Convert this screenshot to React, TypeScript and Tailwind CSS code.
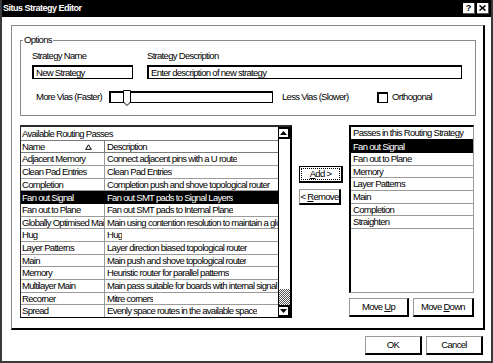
// Situs Strategy Editor — grayscale Win95-style dialog
const PASSES: [string, string][] = [
  ['Adjacent Memory', 'Connect adjacent pins with a U route'],
  ['Clean Pad Entries', 'Clean Pad Entries'],
  ['Completion', 'Completion push and shove topological router'],
  ['Fan out Signal', 'Fan out SMT pads to Signal Layers'],
  ['Fan out to Plane', 'Fan out SMT pads to Internal Plane'],
  ['Globally Optimised Main', 'Main using contention resolution to maintain a global'],
  ['Hug', 'Hug'],
  ['Layer Patterns', 'Layer direction biased topological router'],
  ['Main', 'Main push and shove topological router'],
  ['Memory', 'Heuristic router for parallel patterns'],
  ['Multilayer Main', 'Main pass suitable for boards with internal signal layers'],
  ['Recorner', 'Mitre corners'],
  ['Spread', 'Evenly space routes in the available space'],
];

const STRATEGY = ['Fan out Signal', 'Fan out to Plane', 'Memory', 'Layer Patterns', 'Main', 'Completion', 'Straighten'];

// row pitch ~12.67px: 13,13,12 pattern keeps lines crisp
const rowH = (i: number) => (i % 3 === 2 ? 'h-[12px]' : 'h-[13px]');

function Btn({ children, w, h = 'h-[19px]' }: { children: React.ReactNode; w: string; h?: string }) {
  return (
    <div
      className={`${w} ${h} flex items-center justify-center bg-white border-t border-l border-[#9a9a9a] border-b-2 border-r-2 border-b-black border-r-black leading-none whitespace-nowrap`}>
      {children}
    </div>
  );
}

function Arrow({ up }: { up: boolean }) {
  return (
    <svg width="7" height="4" viewBox="0 0 7 4">
      <polygon points={up ? '3.5,0 7,4 0,4' : '0,0 7,0 3.5,4'} fill="#000" />
    </svg>
  );
}

export default function App() {
  return (
    <div className="font-['Liberation_Sans',Arial,sans-serif] text-[9.5px] tracking-[-0.7px] w-[493px] h-[363px] bg-white border-x-2 border-b-2 border-[#3a3a3a] flex flex-col overflow-hidden text-black whitespace-nowrap">
      {/* Title bar */}
      <div className="h-[17px] bg-black flex items-center justify-between pl-[1px] pr-[2px] shrink-0">
        <span className="font-bold text-[9px] tracking-[-0.5px] text-white leading-none">Situs Strategy Editor</span>
        <div className="flex gap-[2px]">
          <div className="w-[12px] h-[11px] bg-white border-r border-b border-[#555] flex items-center justify-center font-bold text-[9px] tracking-normal leading-none">?</div>
          <div className="w-[12px] h-[11px] bg-white border-r border-b border-[#555] flex items-center justify-center">
            <svg width="7" height="6" viewBox="0 0 7 6"><path d="M0.5 0.5 L6.5 5.5 M6.5 0.5 L0.5 5.5" stroke="#000" strokeWidth="1.6" /></svg>
          </div>
        </div>
      </div>

      {/* Outer frame */}
      <div className="ml-[9px] mt-[8px] w-[474px] h-[305px] border-t border-l border-[#8a8a8a] border-b-2 border-r-2 border-b-black border-r-black flex flex-col pl-[8px] pt-[14px] shrink-0">
        {/* Options group */}
        <div className="relative w-[456px] h-[76px] border border-[#8a8a8a] shrink-0">
          <span className="absolute -top-[7px] left-[2px] bg-white px-[1px] leading-[12px]">Options</span>
          <div className="flex pt-[9px] pl-[11px]">
            <div className="w-[101px] flex flex-col">
              <span className="leading-[12px] h-[12px]">Strategy Name</span>
              <div className="mt-[3px] h-[14px] border-2 border-black border-r border-b flex items-center pl-[2px] leading-none">New Strategy</div>
            </div>
            <div className="ml-[14px] w-[315px] flex flex-col">
              <span className="leading-[12px] h-[12px]">Strategy Description</span>
              <div className="mt-[3px] h-[14px] border-2 border-black border-r border-b flex items-center pl-[2px] leading-none">Enter description of new strategy</div>
            </div>
          </div>
          <div className="flex items-center h-[16px] mt-[10px] pl-[15px]">
            <span className="w-[73px] leading-none">More Vias (Faster)</span>
            <div className="relative w-[164px] h-[12px] border border-black border-t-2 border-l-2">
              <svg className="absolute -top-[3px] left-[12px]" width="8" height="16" viewBox="0 0 8 16">
                <path d="M0.5 0.5 H7.5 V12 L4 15.5 L0.5 12 Z" fill="#fff" stroke="#000" />
              </svg>
            </div>
            <span className="ml-[9px] w-[95px] leading-none">Less Vias (Slower)</span>
            <div className="w-[11px] h-[11px] border border-black border-t-2 border-l-2 bg-white" />
            <span className="ml-[4px] leading-none">Orthogonal</span>
          </div>
        </div>

        {/* Lists */}
        <div className="flex mt-[9px]">
          {/* Available passes */}
          <div className="w-[272px] h-[193px] border-t-2 border-l border-[#2a2a2a] border-b border-r-2 border-r-black border-b-black flex overflow-hidden">
            <div className="w-[259px] flex flex-col overflow-hidden">
              <div className="h-[14px] shrink-0 border-b border-[#7a7a7a] flex items-center pl-[1px] leading-none">Available Routing Passes</div>
              <div className="h-[12px] shrink-0 border-b border-[#7a7a7a] flex leading-none">
                <div className="w-[84px] border-r border-[#7a7a7a] flex items-center justify-between pl-[1px] pr-[12px]">
                  <span>Name</span>
                  <svg width="7" height="6" viewBox="0 0 7 6"><path d="M3.5 0.8 L6.3 5.3 H0.7 Z" fill="none" stroke="#000" /></svg>
                </div>
                <div className="flex items-center pl-[2px]">Description</div>
              </div>
              {PASSES.map(([name, desc], i) => {
                const sel = name === 'Fan out Signal';
                return (
                  <div key={name}
                    className={`${rowH(i)} shrink-0 flex leading-none ${sel ? 'bg-black text-white' : 'border-b border-[#9a9a9a]'}`}>
                    <div className={`w-[84px] shrink-0 overflow-hidden flex items-center pl-[1px] ${sel ? '' : 'border-r border-[#9a9a9a]'}`}>{name}</div>
                    <div className="overflow-hidden flex items-center pl-[2px]">{desc}</div>
                  </div>
                );
              })}
            </div>
            {/* Scrollbar */}
            <div className="w-[12px] flex flex-col border-l border-black">
              <div className="h-[12px] shrink-0 border-2 border-black border-l-0 flex items-center justify-center bg-white"><Arrow up /></div>
              <div className="flex-1 bg-white" />
              <div className="h-[16px] shrink-0 bg-[repeating-conic-gradient(#555_0_25%,#fff_0_50%)] bg-[length:2px_2px]" />
              <div className="h-[12px] shrink-0 border-2 border-black border-l-0 flex items-center justify-center bg-white"><Arrow up={false} /></div>
            </div>
          </div>

          {/* Add / Remove */}
          <div className="ml-[7px] mt-[41px] flex flex-col gap-[6px]">
            <div className="w-[44px] h-[17px] border border-black border-b-2 border-r-2 p-[1px]">
              <div className="w-full h-full border border-dotted border-black flex items-center justify-center leading-none">
                <span><span className="underline">A</span>dd &gt;</span>
              </div>
            </div>
            <Btn w="w-[42px]" h="h-[16px]"><span>&lt; <span className="underline">R</span>emove</span></Btn>
          </div>

          {/* Strategy passes */}
          <div className="ml-[6px] flex flex-col">
            <div className="w-[125px] h-[168px] border-t-2 border-l-2 border-black border-r border-b border-r-[#9a9a9a] border-b-[#9a9a9a] flex flex-col">
              <div className="h-[13px] shrink-0 border-b border-black flex items-center pl-[2px] leading-none">Passes in this Routing Strategy</div>
              {STRATEGY.map((s, i) => {
                const sel = i === 0;
                return (
                  <div key={s}
                    className={`${rowH(i)} shrink-0 flex items-center pl-[2px] leading-none ${sel ? 'bg-black text-white' : 'border-b border-[#9a9a9a]'}`}>
                    {s}
                  </div>
                );
              })}
            </div>
            <div className="mt-[5px] flex gap-[4px]">
              <Btn w="w-[60px]"><span>Move <span className="underline">U</span>p</span></Btn>
              <Btn w="w-[61px]"><span>Move <span className="underline">D</span>own</span></Btn>
            </div>
          </div>
        </div>
      </div>

      {/* OK / Cancel */}
      <div className="flex justify-end gap-[4px] mt-[6px] pr-[8px]">
        <Btn w="w-[57px]" h="h-[19px]">OK</Btn>
        <Btn w="w-[57px]" h="h-[19px]">Cancel</Btn>
      </div>
    </div>
  );
}
